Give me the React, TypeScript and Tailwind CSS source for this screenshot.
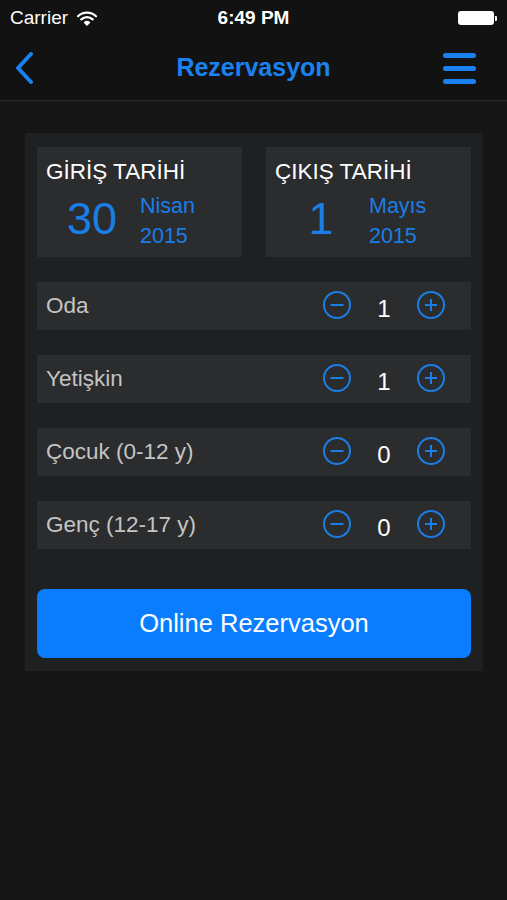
import React from "react";

const font = { fontFamily: '"Liberation Sans", Arial, sans-serif' };

function Stepper({ label, value }: { label: string; value: number }) {
  return (
    <div className="h-[48px] bg-[#2b2c2e] flex items-center pl-[9px] pr-[25px]">
      <span className="flex-1 text-[22.5px] text-[#c4c4c4]">{label}</span>
      <svg width="30" height="30" viewBox="0 0 30 30" className="-mt-[2px]">
        <circle cx="15" cy="15" r="13" fill="none" stroke="#1a7ee6" strokeWidth="2" />
        <line x1="8.5" y1="15" x2="21.5" y2="15" stroke="#1a7ee6" strokeWidth="2" />
      </svg>
      <span className="w-[64px] text-center text-[24px] text-white mt-[6px]">{value}</span>
      <svg width="30" height="30" viewBox="0 0 30 30" className="-mt-[2px]">
        <circle cx="15" cy="15" r="13" fill="none" stroke="#1a7ee6" strokeWidth="2" />
        <line x1="9" y1="15" x2="21" y2="15" stroke="#1a7ee6" strokeWidth="2" />
        <line x1="15" y1="9" x2="15" y2="21" stroke="#1a7ee6" strokeWidth="2" />
      </svg>
    </div>
  );
}

function DateBox({ title, day, month, year }: { title: string; day: string; month: string; year: string }) {
  return (
    <div className="w-[205px] h-[110px] bg-[#2b2c2e] pt-[12px]">
      <div className="pl-[9px] text-[22.5px] leading-[26px] text-white">{title}</div>
      <div className="flex items-center pl-[15px] mt-[2px]">
        <span className="w-[80px] text-center text-[45px] leading-[50px] text-[#1a7ee6]">{day}</span>
        <div className="ml-[8px] mt-[4px] flex flex-col text-[21.5px] leading-[30px] text-[#1a7ee6]">
          <span>{month}</span>
          <span>{year}</span>
        </div>
      </div>
    </div>
  );
}

export default function App() {
  return (
    <div className="w-[507px] h-[900px] bg-[#161616] flex flex-col overflow-hidden" style={font}>
      {/* status bar */}
      <div className="h-[36px] bg-[#121212] flex items-center px-[10px] relative">
        <span className="text-[19px] text-white">Carrier</span>
        <svg width="20" height="15" viewBox="0 0 20 15" className="ml-[9px]">
          <path d="M1 5.2 A13 13 0 0 1 19 5.2" fill="none" stroke="white" strokeWidth="2.2" strokeLinecap="round" />
          <path d="M4.3 8.4 A8.3 8.3 0 0 1 15.7 8.4" fill="none" stroke="white" strokeWidth="2.2" strokeLinecap="round" />
          <path d="M7.6 11.5 A3.6 3.6 0 0 1 12.4 11.5 L10 14 Z" fill="white" stroke="white" strokeWidth="1.5" strokeLinejoin="round" />
        </svg>
        <span className="absolute left-0 right-0 text-center text-[19px] font-bold text-white pointer-events-none">6:49 PM</span>
        <div className="ml-auto flex items-center">
          <div className="w-[36px] h-[14px] bg-white rounded-[3px]" />
          <div className="w-[2px] h-[5px] bg-white ml-[1px] rounded-r-[1px]" />
        </div>
      </div>

      {/* nav bar */}
      <div className="h-[65px] bg-[#121212] border-b border-[#2a2a2a] flex items-center px-[13px] relative">
        <svg width="22" height="32" viewBox="0 0 22 32">
          <path d="M18 2 L5 16 L18 30" fill="none" stroke="#1a82f0" strokeWidth="4" strokeLinecap="round" strokeLinejoin="round" />
        </svg>
        <span className="absolute left-0 right-0 text-center text-[25px] font-bold text-[#1a82f0] pointer-events-none">Rezervasyon</span>
        <div className="ml-auto mr-[18px] flex flex-col gap-[8px]">
          <div className="w-[33px] h-[5px] rounded-full bg-[#1a82f0]" />
          <div className="w-[33px] h-[5px] rounded-full bg-[#1a82f0]" />
          <div className="w-[33px] h-[5px] rounded-full bg-[#1a82f0]" />
        </div>
      </div>

      {/* content card */}
      <div className="mt-[32px] mx-[25px] w-[458px] bg-[#1f2022] px-[12px] pt-[14px] pb-[13px]">
        <div className="flex gap-[24px]">
          <DateBox title="GİRİŞ TARİHİ" day="30" month="Nisan" year="2015" />
          <DateBox title="ÇIKIŞ TARİHİ" day="1" month="Mayıs" year="2015" />
        </div>
        <div className="mt-[25px] flex flex-col gap-[25px]">
          <Stepper label="Oda" value={1} />
          <Stepper label="Yetişkin" value={1} />
          <Stepper label="Çocuk (0-12 y)" value={0} />
          <Stepper label="Genç (12-17 y)" value={0} />
        </div>
        <button className="mt-[40px] w-full h-[69px] rounded-[8px] bg-[#0a7dff] text-white text-[25.5px]">
          Online Rezervasyon
        </button>
      </div>
    </div>
  );
}
